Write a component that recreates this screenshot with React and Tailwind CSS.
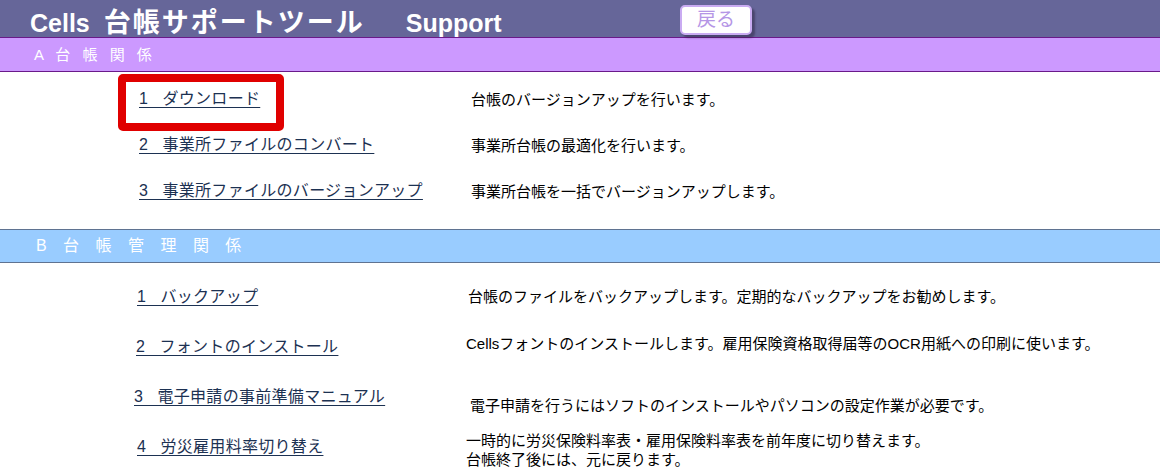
import React from "react";

const JP = { fontFamily: '"Liberation Sans", "Noto Sans CJK JP", sans-serif' };

function Row({ h, padL, num, label, descPad, descTop, children }) {
  return (
    <div className={`flex items-center ${h}`}>
      <div className={`w-[466px] shrink-0 ${padL}`}>
        <a
          href="#"
          className="text-[16px] leading-[20px] tracking-[0.3px] text-[#1c3152] underline underline-offset-[3px] decoration-[1px] whitespace-pre"
        >
          {num + "   " + label}
        </a>
      </div>
      <div className={`text-[15px] leading-[19px] text-black whitespace-nowrap ${descPad} ${descTop}`}>
        {children}
      </div>
    </div>
  );
}

export default function App() {
  return (
    <div className="relative w-[1160px] h-[472px] overflow-hidden bg-white" style={JP}>
      {/* header */}
      <div className="h-[38px] bg-[#666699] border-b border-[#6a1a8a] flex items-center pl-[30px]">
        <div className="w-[650px] shrink-0 flex items-end text-white font-bold pt-[9px]">
          <span className="text-[25px] leading-[30px]">Cells</span>
          <span className="ml-[14px] text-[27px] leading-[30px] tracking-[2px]">台帳サポートツール</span>
          <span className="ml-[41px] text-[25px] leading-[30px]">Support</span>
        </div>
        <div className="mt-[2px] w-[72px] h-[30px] bg-white rounded-[5px] border-2 border-[#c9abf2] shadow-[3px_3px_2px_rgba(40,30,60,0.45)] flex items-center justify-center text-[19px] leading-[22px] text-[#b596e6]">
          戻る
        </div>
      </div>

      {/* A bar */}
      <div className="h-[34px] bg-[#cc99ff] border-b border-[#6a1a8a] flex items-center pl-[34px] text-white text-[15px] leading-[18px] tracking-[4px]">
        A 台 帳 関 係
      </div>

      {/* A rows */}
      <div className="pt-[4px]">
        <Row h="h-[46px]" padL="pl-[139px]" num="1" label="ダウンロード" descPad="pl-[5px]" descTop="">
          台帳のバージョンアップを行います。
        </Row>
        <Row h="h-[46px]" padL="pl-[139px]" num="2" label="事業所ファイルのコンバート" descPad="pl-[5px]" descTop="">
          事業所台帳の最適化を行います。
        </Row>
        <Row h="h-[46px]" padL="pl-[139px]" num="3" label="事業所ファイルのバージョンアップ" descPad="pl-[5px]" descTop="">
          事業所台帳を一括でバージョンアップします。
        </Row>
      </div>

      {/* B bar */}
      <div className="mt-[15px] h-[34px] bg-[#99ccff] border-y border-[#5f7391] flex items-center pl-[36px] text-white text-[16px] leading-[18px] tracking-[6px]">
        B 台 帳 管 理 関 係
      </div>

      {/* B rows */}
      <div className="pt-[9px]">
        <Row h="h-[50px]" padL="pl-[137px]" num="1" label="バックアップ" descPad="pl-[2px]" descTop="-mt-[2px]">
          台帳のファイルをバックアップします。定期的なバックアップをお勧めします。
        </Row>
        <Row h="h-[50px]" padL="pl-[136px]" num="2" label="フォントのインストール" descPad="pl-0" descTop="-mt-[8px]">
          Cellsフォントのインストールします。雇用保険資格取得届等のOCR用紙への印刷に使います。
        </Row>
        <Row h="h-[50px]" padL="pl-[134px]" num="3" label="電子申請の事前準備マニュアル" descPad="pl-[4px]" descTop="mt-[16px]">
          電子申請を行うにはソフトのインストールやパソコンの設定作業が必要です。
        </Row>
        <Row h="h-[50px]" padL="pl-[137px]" num="4" label="労災雇用料率切り替え" descPad="pl-0" descTop="mt-[5px]">
          <div>一時的に労災保険料率表・雇用保険料率表を前年度に切り替えます。</div>
          <div>台帳終了後には、元に戻ります。</div>
        </Row>
      </div>

      {/* red highlight box */}
      <div className="absolute left-[118px] top-[74px] w-[166px] h-[57px] border-[8px] border-[#e00000] rounded-[5px]" />
    </div>
  );
}
